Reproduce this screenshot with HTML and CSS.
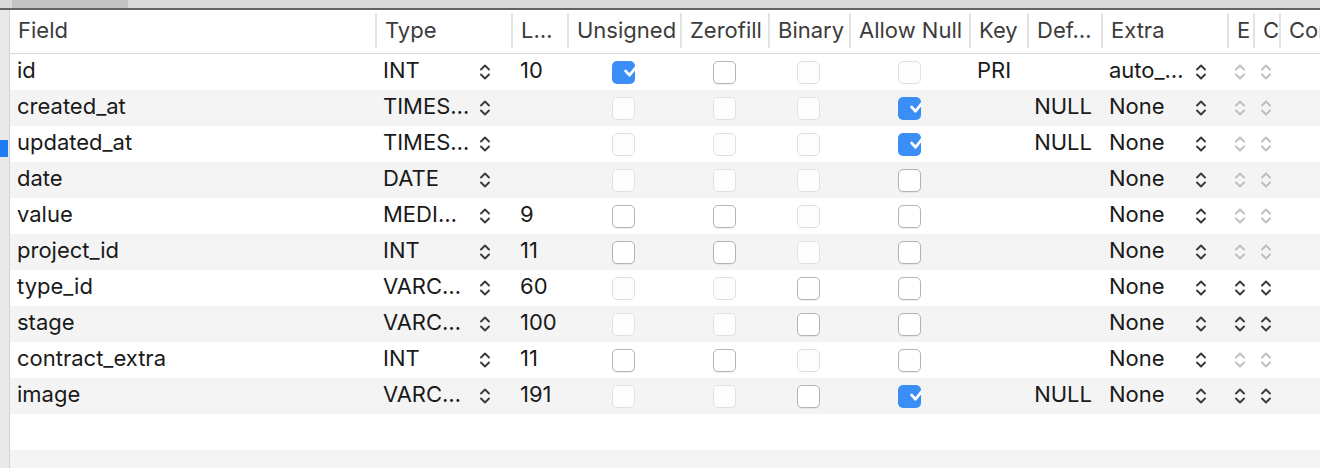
FILE: index.html
```html
<!DOCTYPE html>
<html>
<head>
<meta charset="utf-8">
<link rel="stylesheet" href="styles.css">
</head>
<body>
<div class="app">
  <div class="topbar"><div class="tab"></div></div>
  <div class="main">
    <div class="gutter"><div class="marker"></div></div>
    <div class="table">
      <div class="row head">
        <div class="hc first">Field</div>
        <div class="hc">Type</div>
        <div class="hc">L…</div>
        <div class="hc">Unsigned</div>
        <div class="hc">Zerofill</div>
        <div class="hc">Binary</div>
        <div class="hc">Allow Null</div>
        <div class="hc">Key</div>
        <div class="hc">Def…</div>
        <div class="hc">Extra</div>
        <div class="hc">E</div>
        <div class="hc">C</div>
        <div class="hc">Comment</div>
      </div>

      <div class="row">
        <div class="c field">id</div>
        <div class="c type"><span class="t">INT</span><svg class="st" viewBox="0 0 12 20"><path d="M2 7.5L6 3.5L10 7.5M2 12.5L6 16.5L10 12.5"/></svg></div>
        <div class="c len">10</div>
        <div class="c ck"><span class="cb c"><svg width="23" height="23" viewBox="0 0 23 23"><path d="M5.6 12L9.6 16.2L17.4 6.4"/></svg></span></div>
        <div class="c ck"><span class="cb u"></span></div>
        <div class="c ck"><span class="cb d"></span></div>
        <div class="c ck"><span class="cb d"></span></div>
        <div class="c key">PRI</div>
        <div class="c def"></div>
        <div class="c extra"><span class="t">auto_…</span><svg class="st" viewBox="0 0 12 20"><path d="M2 7.5L6 3.5L10 7.5M2 12.5L6 16.5L10 12.5"/></svg></div>
        <div class="c sm"><svg class="st off" viewBox="0 0 12 20"><path d="M2 7.5L6 3.5L10 7.5M2 12.5L6 16.5L10 12.5"/></svg></div>
        <div class="c sm"><svg class="st off" viewBox="0 0 12 20"><path d="M2 7.5L6 3.5L10 7.5M2 12.5L6 16.5L10 12.5"/></svg></div>
        <div class="c"></div>
      </div>

      <div class="row alt">
        <div class="c field">created_at</div>
        <div class="c type"><span class="t">TIMES…</span><svg class="st" viewBox="0 0 12 20"><path d="M2 7.5L6 3.5L10 7.5M2 12.5L6 16.5L10 12.5"/></svg></div>
        <div class="c len"></div>
        <div class="c ck"><span class="cb d"></span></div>
        <div class="c ck"><span class="cb d"></span></div>
        <div class="c ck"><span class="cb d"></span></div>
        <div class="c ck"><span class="cb c"><svg width="23" height="23" viewBox="0 0 23 23"><path d="M5.6 12L9.6 16.2L17.4 6.4"/></svg></span></div>
        <div class="c key"></div>
        <div class="c def">NULL</div>
        <div class="c extra"><span class="t">None</span><svg class="st" viewBox="0 0 12 20"><path d="M2 7.5L6 3.5L10 7.5M2 12.5L6 16.5L10 12.5"/></svg></div>
        <div class="c sm"><svg class="st off" viewBox="0 0 12 20"><path d="M2 7.5L6 3.5L10 7.5M2 12.5L6 16.5L10 12.5"/></svg></div>
        <div class="c sm"><svg class="st off" viewBox="0 0 12 20"><path d="M2 7.5L6 3.5L10 7.5M2 12.5L6 16.5L10 12.5"/></svg></div>
        <div class="c"></div>
      </div>

      <div class="row">
        <div class="c field">updated_at</div>
        <div class="c type"><span class="t">TIMES…</span><svg class="st" viewBox="0 0 12 20"><path d="M2 7.5L6 3.5L10 7.5M2 12.5L6 16.5L10 12.5"/></svg></div>
        <div class="c len"></div>
        <div class="c ck"><span class="cb d"></span></div>
        <div class="c ck"><span class="cb d"></span></div>
        <div class="c ck"><span class="cb d"></span></div>
        <div class="c ck"><span class="cb c"><svg width="23" height="23" viewBox="0 0 23 23"><path d="M5.6 12L9.6 16.2L17.4 6.4"/></svg></span></div>
        <div class="c key"></div>
        <div class="c def">NULL</div>
        <div class="c extra"><span class="t">None</span><svg class="st" viewBox="0 0 12 20"><path d="M2 7.5L6 3.5L10 7.5M2 12.5L6 16.5L10 12.5"/></svg></div>
        <div class="c sm"><svg class="st off" viewBox="0 0 12 20"><path d="M2 7.5L6 3.5L10 7.5M2 12.5L6 16.5L10 12.5"/></svg></div>
        <div class="c sm"><svg class="st off" viewBox="0 0 12 20"><path d="M2 7.5L6 3.5L10 7.5M2 12.5L6 16.5L10 12.5"/></svg></div>
        <div class="c"></div>
      </div>

      <div class="row alt">
        <div class="c field">date</div>
        <div class="c type"><span class="t">DATE</span><svg class="st" viewBox="0 0 12 20"><path d="M2 7.5L6 3.5L10 7.5M2 12.5L6 16.5L10 12.5"/></svg></div>
        <div class="c len"></div>
        <div class="c ck"><span class="cb d"></span></div>
        <div class="c ck"><span class="cb d"></span></div>
        <div class="c ck"><span class="cb d"></span></div>
        <div class="c ck"><span class="cb u"></span></div>
        <div class="c key"></div>
        <div class="c def"></div>
        <div class="c extra"><span class="t">None</span><svg class="st" viewBox="0 0 12 20"><path d="M2 7.5L6 3.5L10 7.5M2 12.5L6 16.5L10 12.5"/></svg></div>
        <div class="c sm"><svg class="st off" viewBox="0 0 12 20"><path d="M2 7.5L6 3.5L10 7.5M2 12.5L6 16.5L10 12.5"/></svg></div>
        <div class="c sm"><svg class="st off" viewBox="0 0 12 20"><path d="M2 7.5L6 3.5L10 7.5M2 12.5L6 16.5L10 12.5"/></svg></div>
        <div class="c"></div>
      </div>

      <div class="row">
        <div class="c field">value</div>
        <div class="c type"><span class="t">MEDI…</span><svg class="st" viewBox="0 0 12 20"><path d="M2 7.5L6 3.5L10 7.5M2 12.5L6 16.5L10 12.5"/></svg></div>
        <div class="c len">9</div>
        <div class="c ck"><span class="cb u"></span></div>
        <div class="c ck"><span class="cb u"></span></div>
        <div class="c ck"><span class="cb d"></span></div>
        <div class="c ck"><span class="cb u"></span></div>
        <div class="c key"></div>
        <div class="c def"></div>
        <div class="c extra"><span class="t">None</span><svg class="st" viewBox="0 0 12 20"><path d="M2 7.5L6 3.5L10 7.5M2 12.5L6 16.5L10 12.5"/></svg></div>
        <div class="c sm"><svg class="st off" viewBox="0 0 12 20"><path d="M2 7.5L6 3.5L10 7.5M2 12.5L6 16.5L10 12.5"/></svg></div>
        <div class="c sm"><svg class="st off" viewBox="0 0 12 20"><path d="M2 7.5L6 3.5L10 7.5M2 12.5L6 16.5L10 12.5"/></svg></div>
        <div class="c"></div>
      </div>

      <div class="row alt">
        <div class="c field">project_id</div>
        <div class="c type"><span class="t">INT</span><svg class="st" viewBox="0 0 12 20"><path d="M2 7.5L6 3.5L10 7.5M2 12.5L6 16.5L10 12.5"/></svg></div>
        <div class="c len">11</div>
        <div class="c ck"><span class="cb u"></span></div>
        <div class="c ck"><span class="cb u"></span></div>
        <div class="c ck"><span class="cb d"></span></div>
        <div class="c ck"><span class="cb u"></span></div>
        <div class="c key"></div>
        <div class="c def"></div>
        <div class="c extra"><span class="t">None</span><svg class="st" viewBox="0 0 12 20"><path d="M2 7.5L6 3.5L10 7.5M2 12.5L6 16.5L10 12.5"/></svg></div>
        <div class="c sm"><svg class="st off" viewBox="0 0 12 20"><path d="M2 7.5L6 3.5L10 7.5M2 12.5L6 16.5L10 12.5"/></svg></div>
        <div class="c sm"><svg class="st off" viewBox="0 0 12 20"><path d="M2 7.5L6 3.5L10 7.5M2 12.5L6 16.5L10 12.5"/></svg></div>
        <div class="c"></div>
      </div>

      <div class="row">
        <div class="c field">type_id</div>
        <div class="c type"><span class="t">VARC…</span><svg class="st" viewBox="0 0 12 20"><path d="M2 7.5L6 3.5L10 7.5M2 12.5L6 16.5L10 12.5"/></svg></div>
        <div class="c len">60</div>
        <div class="c ck"><span class="cb d"></span></div>
        <div class="c ck"><span class="cb d"></span></div>
        <div class="c ck"><span class="cb u"></span></div>
        <div class="c ck"><span class="cb u"></span></div>
        <div class="c key"></div>
        <div class="c def"></div>
        <div class="c extra"><span class="t">None</span><svg class="st" viewBox="0 0 12 20"><path d="M2 7.5L6 3.5L10 7.5M2 12.5L6 16.5L10 12.5"/></svg></div>
        <div class="c sm"><svg class="st" viewBox="0 0 12 20"><path d="M2 7.5L6 3.5L10 7.5M2 12.5L6 16.5L10 12.5"/></svg></div>
        <div class="c sm"><svg class="st" viewBox="0 0 12 20"><path d="M2 7.5L6 3.5L10 7.5M2 12.5L6 16.5L10 12.5"/></svg></div>
        <div class="c"></div>
      </div>

      <div class="row alt">
        <div class="c field">stage</div>
        <div class="c type"><span class="t">VARC…</span><svg class="st" viewBox="0 0 12 20"><path d="M2 7.5L6 3.5L10 7.5M2 12.5L6 16.5L10 12.5"/></svg></div>
        <div class="c len">100</div>
        <div class="c ck"><span class="cb d"></span></div>
        <div class="c ck"><span class="cb d"></span></div>
        <div class="c ck"><span class="cb u"></span></div>
        <div class="c ck"><span class="cb u"></span></div>
        <div class="c key"></div>
        <div class="c def"></div>
        <div class="c extra"><span class="t">None</span><svg class="st" viewBox="0 0 12 20"><path d="M2 7.5L6 3.5L10 7.5M2 12.5L6 16.5L10 12.5"/></svg></div>
        <div class="c sm"><svg class="st" viewBox="0 0 12 20"><path d="M2 7.5L6 3.5L10 7.5M2 12.5L6 16.5L10 12.5"/></svg></div>
        <div class="c sm"><svg class="st" viewBox="0 0 12 20"><path d="M2 7.5L6 3.5L10 7.5M2 12.5L6 16.5L10 12.5"/></svg></div>
        <div class="c"></div>
      </div>

      <div class="row">
        <div class="c field">contract_extra</div>
        <div class="c type"><span class="t">INT</span><svg class="st" viewBox="0 0 12 20"><path d="M2 7.5L6 3.5L10 7.5M2 12.5L6 16.5L10 12.5"/></svg></div>
        <div class="c len">11</div>
        <div class="c ck"><span class="cb u"></span></div>
        <div class="c ck"><span class="cb u"></span></div>
        <div class="c ck"><span class="cb d"></span></div>
        <div class="c ck"><span class="cb u"></span></div>
        <div class="c key"></div>
        <div class="c def"></div>
        <div class="c extra"><span class="t">None</span><svg class="st" viewBox="0 0 12 20"><path d="M2 7.5L6 3.5L10 7.5M2 12.5L6 16.5L10 12.5"/></svg></div>
        <div class="c sm"><svg class="st off" viewBox="0 0 12 20"><path d="M2 7.5L6 3.5L10 7.5M2 12.5L6 16.5L10 12.5"/></svg></div>
        <div class="c sm"><svg class="st off" viewBox="0 0 12 20"><path d="M2 7.5L6 3.5L10 7.5M2 12.5L6 16.5L10 12.5"/></svg></div>
        <div class="c"></div>
      </div>

      <div class="row alt">
        <div class="c field">image</div>
        <div class="c type"><span class="t">VARC…</span><svg class="st" viewBox="0 0 12 20"><path d="M2 7.5L6 3.5L10 7.5M2 12.5L6 16.5L10 12.5"/></svg></div>
        <div class="c len">191</div>
        <div class="c ck"><span class="cb d"></span></div>
        <div class="c ck"><span class="cb d"></span></div>
        <div class="c ck"><span class="cb u"></span></div>
        <div class="c ck"><span class="cb c"><svg width="23" height="23" viewBox="0 0 23 23"><path d="M5.6 12L9.6 16.2L17.4 6.4"/></svg></span></div>
        <div class="c key"></div>
        <div class="c def">NULL</div>
        <div class="c extra"><span class="t">None</span><svg class="st" viewBox="0 0 12 20"><path d="M2 7.5L6 3.5L10 7.5M2 12.5L6 16.5L10 12.5"/></svg></div>
        <div class="c sm"><svg class="st" viewBox="0 0 12 20"><path d="M2 7.5L6 3.5L10 7.5M2 12.5L6 16.5L10 12.5"/></svg></div>
        <div class="c sm"><svg class="st" viewBox="0 0 12 20"><path d="M2 7.5L6 3.5L10 7.5M2 12.5L6 16.5L10 12.5"/></svg></div>
        <div class="c"></div>
      </div>

      <div class="row empty"></div>
      <div class="row empty alt"></div>
    </div>
  </div>
</div>
</body>
</html>
```

FILE: styles.css
```css
html, body {
  margin: 0;
  padding: 0;
  background: #fff;
}
body {
  width: 1320px;
  height: 468px;
  overflow: hidden;
  font-family: Inter, "Noto Sans", sans-serif;
  font-size: 22px;
  color: #1a1a1a;
}
.app {
  display: flex;
  flex-direction: column;
  height: 468px;
}
.topbar {
  height: 8px;
  background: #dadada;
  border-bottom: 2px solid #636363;
  display: flex;
  padding-left: 12px;
  flex: none;
}
.tab {
  width: 116px;
  background: #c3c3c3;
}
.main {
  flex: 1;
  display: flex;
  min-height: 0;
}
.gutter {
  width: 9px;
  flex: none;
  background: #e9e9e9;
  border-right: 1px solid #d3d3d3;
  display: flex;
  flex-direction: column;
}
.marker {
  margin-top: 130px;
  width: 8px;
  height: 17px;
  background: #1f7cf4;
}
.table {
  flex: 1;
  overflow: hidden;
  display: flex;
  flex-direction: column;
}
.row {
  display: grid;
  grid-template-columns: 365px 136px 56px 113px 88px 81px 120px 58px 74px 126px 26px 26px 220px;
  height: 36px;
  flex: none;
  white-space: nowrap;
}
.row.alt {
  background: #f4f4f4;
}
.row.head {
  height: 43px;
  border-bottom: 1px solid #dadada;
  color: #3c3c3c;
  background: #fff;
}
.hc {
  display: flex;
  align-items: center;
  padding-left: 8px;
  padding-bottom: 1px;
  border-left: 2px solid #e3e3e3;
  margin: 3px 0 5px 0;
  overflow: hidden;
}
.hc.first {
  border-left: none;
  padding-left: 8px;
}
.c {
  display: flex;
  align-items: center;
  overflow: hidden;
  padding-left: 8px;
  padding-bottom: 4px;
  box-sizing: border-box;
}
.c.field {
  padding-left: 7px;
}
.c.len {
  padding-left: 9px;
}
.c.type, .c.extra {
  justify-content: space-between;
  padding-right: 20px;
  padding-bottom: 0;
}
.c.type .t, .c.extra .t {
  padding-bottom: 4px;
}
.c.ck {
  justify-content: center;
  padding-left: 0;
  padding-bottom: 0;
}
.c.def {
  justify-content: flex-end;
  padding-right: 9px;
}
.c.sm {
  justify-content: center;
  padding-left: 0;
  padding-bottom: 0;
}
.st {
  width: 12px;
  height: 20px;
  flex: none;
  fill: none;
  stroke: #3a3a3a;
  stroke-width: 1.9;
  stroke-linecap: round;
  stroke-linejoin: round;
}
.st.off {
  stroke: #bdbdbd;
}
.cb {
  width: 23px;
  height: 23px;
  box-sizing: border-box;
  border-radius: 5px;
  display: flex;
  flex: none;
}
.cb.u {
  background: #fff;
  border: 1px solid #b3b3b3;
  box-shadow: 0 1px 1px rgba(0, 0, 0, 0.06);
}
.cb.d {
  background: #fdfdfd;
  border: 1px solid #e1e1e1;
}
.cb.c {
  background: #3a8ef6;
}
.cb.c svg {
  display: block;
  flex: none;
  width: 23px;
  height: 23px;
  fill: none;
  stroke: #ffffff;
  stroke-width: 2.7;
  stroke-linecap: round;
  stroke-linejoin: round;
}
```
